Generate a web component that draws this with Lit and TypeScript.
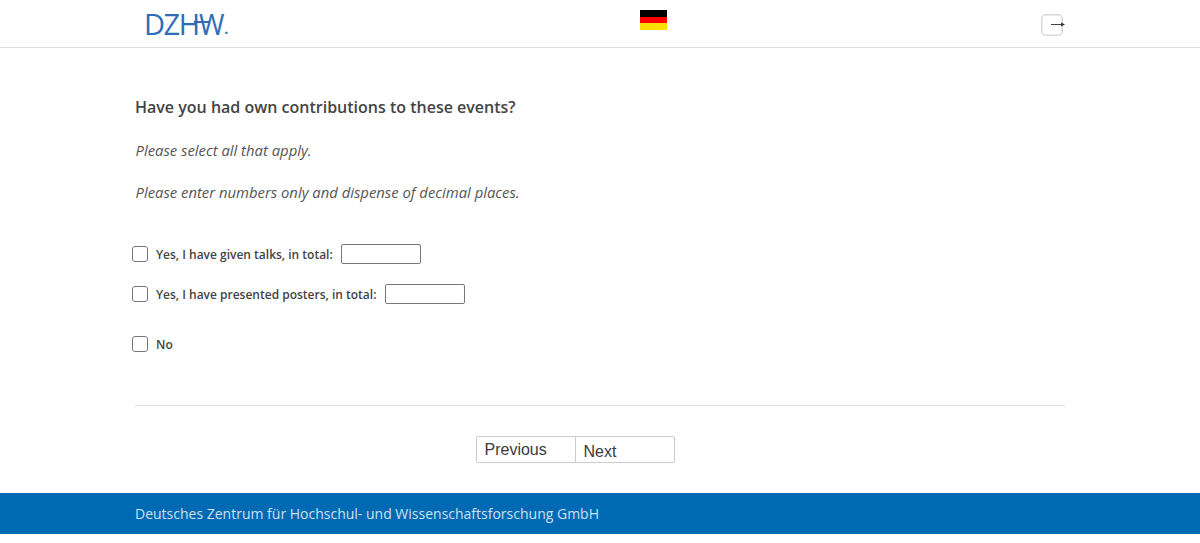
import { LitElement, html, css } from "lit";
import { customElement } from "lit/decorators.js";

@customElement("app-root")
export class AppRoot extends LitElement {
  static styles = css`
    :host { display: block; font-family: "Open Sans", sans-serif; color: #444; background: #fff; }
    .header { height: 47px; border-bottom: 1px solid #ddd; display: grid; grid-template-columns: 505px 27px 398px; padding: 0 135px; }
    .logo { position: relative; display: flex; align-self: start; justify-self: start; margin: 8px 0 0 9px; font-family: "Open Sans", sans-serif; font-weight: 400; font-size: 29px; line-height: 32px; color: #2f6db5; height: 32px; letter-spacing: -0.6px; }
    .logo .h { letter-spacing: -1.5px; }
    .logo .w { letter-spacing: -1px; transform: scaleX(0.95); transform-origin: left center; }
    .logo .dot { font-size: 14px; font-weight: 700; margin-left: 0; line-height: 42px; }
    .logo .bar { position: absolute; left: 50px; top: 13px; width: 15px; height: 2px; background: #2f6db5; }
    .flag { width: 27px; height: 20px; margin-top: 10px; display: flex; flex-direction: column; }
    .flag i { flex: 1; display: block; }
    .exit { justify-self: end; margin-top: 14px; width: 24px; height: 22px; position: relative; }
    .exit svg { display: block; }
    .main { padding: 49px 135px 0; }
    h1 { margin: 0; font-size: 16px; font-weight: 600; line-height: 20px; color: #444; }
    .hint { margin: 22px 0 0 0.5px; font-size: 14.84px; font-style: italic; line-height: 20px; color: #555; }
    h1 + .hint { margin-top: 23px; }
    .options { margin-top: 42px; margin-left: -3px; display: flex; flex-direction: column; }
    .opt { display: flex; align-items: center; height: 20px; font-size: 12px; font-weight: 600; color: #444; }
    .opt + .opt { margin-top: 20px; }
    .opt.no { margin-top: 30px; }
    .box { width: 14px; height: 14px; border: 1px solid #777; border-radius: 3px; margin-right: 8px; flex: none; background: #fff; }
    .num { width: 78px; height: 18px; border: 1px solid #777; border-radius: 2px; margin-left: 8px; padding: 0; background: #fff; box-sizing: content-box; }
    .num.wide { margin-left: 8.6px; }
    hr { border: 0; border-top: 1px solid #ddd; margin: 51px 0 0; }
    .nav { display: flex; justify-content: center; margin-top: 30px; padding-right: 50px; }
    .group { display: flex; border: 1px solid #ccc; border-radius: 2px; width: 197px; height: 25px; font-family: "Liberation Sans", sans-serif; font-size: 16px; color: #3a3a3a; }
    .group span { display: block; padding-left: 8px; }
    .group .prev { width: 90px; border-right: 1px solid #ccc; line-height: 26px; }
    .group .next { line-height: 30px; flex: 1; padding-left: 8px; }
    .footer { margin-top: 30px; height: 41px; background: #0069b4; color: #cfe0ee; font-size: 14px; line-height: 41px; padding-left: 135px; }
    .tail { height: 9px; }
  `;

  render() {
    return html`
      <div class="header">
        <div class="logo"><span class="h">DZH</span><span class="w">W</span><span class="dot">.</span><span class="bar"></span></div>
        <div class="flag">
          <i style="background:#000"></i><i style="background:#f00"></i><i style="background:#ffdd00"></i>
        </div>
        <div class="exit">
          <svg width="24" height="22" viewBox="0 0 24 22">
            <rect x="0.75" y="0.75" width="20.5" height="20.5" rx="4" fill="#fff" stroke="#d8d8d8" stroke-width="1.5"/>
            <path d="M10 10.5h11" stroke="#444" stroke-width="1"/>
            <path d="M20 8.5l4 2-4 2z" fill="#333"/>
          </svg>
        </div>
      </div>
      <div class="main">
        <h1>Have you had own contributions to these events?</h1>
        <p class="hint">Please select all that apply.</p>
        <p class="hint">Please enter numbers only and dispense of decimal places.</p>
        <div class="options">
          <div class="opt"><span class="box"></span>Yes, I have given talks, in total:<span class="num"></span></div>
          <div class="opt"><span class="box"></span>Yes, I have presented posters, in total:<span class="num wide"></span></div>
          <div class="opt no"><span class="box"></span>No</div>
        </div>
        <hr />
        <div class="nav">
          <div class="group"><span class="prev">Previous</span><span class="next">Next</span></div>
        </div>
      </div>
      <div class="footer">Deutsches Zentrum für Hochschul- und Wissenschaftsforschung GmbH</div>
      <div class="tail"></div>
    `;
  }
}
